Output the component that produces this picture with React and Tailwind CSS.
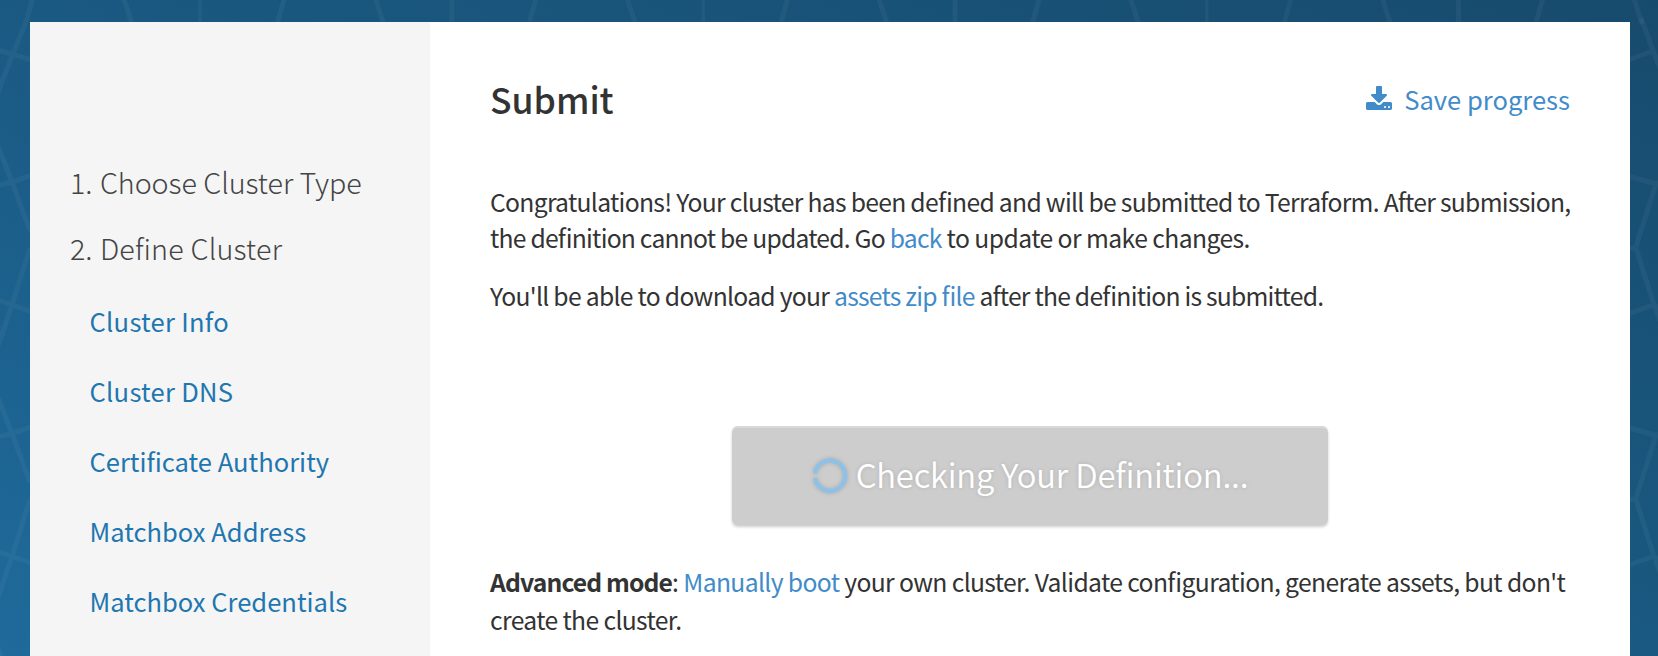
import React from "react";

const TILE = 251.7;
const columns = [-1, 0, 1, 2, 3, 4, 5, 6];
const rows = [0, 1, 2];

function Backdrop() {
  return (
    <svg className="absolute inset-0 h-full w-full" viewBox="0 0 1658 656" fill="none" stroke="#fff" strokeOpacity="0.045" strokeWidth="5">
      {columns.map((c) => (
        <g key={c} transform={`translate(${c * TILE} 0)`}>
          <path d="M34.500 -8L26 22" />
          <path d="M121 -10L132 24" />
          <path d="M200 -2V22" strokeWidth={c % 2 ? 5 : 3.5} />
        </g>
      ))}
      <path d="M26 22L12 56L-2 92M-2 50L32 60M1628 60L1653 51M1641 18L1653 50L1662 74" />
      {rows.map((r) => (
        <g key={r} transform={`translate(0 ${r * 251.500})`}>
          <path d="M-2 146L12 182L30 231M30 248L12 305L-2 346M-2 185.500L12 182L32 175M-2 300L12 305L32 312" />
          <path d="M1628 176L1656 184L1660 182M1656 184L1638 240L1636 248L1653 302L1662 326M1628 248H1636M1628 314L1653 305L1662 309" />
        </g>
      ))}
    </svg>
  );
}

function DownloadIcon() {
  return (
    <svg className="h-6 w-[26px]" viewBox="0 0 1664 1536" fill="currentColor">
      <path d="M1280 1344q0-26-19-45t-45-19-45 19-19 45 19 45 45 19 45-19 19-45zm256 0q0-26-19-45t-45-19-45 19-19 45 19 45 45 19 45-19 19-45zm128-224v320q0 40-28 68t-68 28h-1472q-40 0-68-28t-28-68v-320q0-40 28-68t68-28h465l135 136q58 56 136 56t136-56l136-136h464q40 0 68 28t28 68zm-325-569q17 41-14 70l-448 448q-18 19-45 19t-45-19l-448-448q-31-29-14-70 17-39 59-39h256v-448q0-26 19-45t45-19h256q26 0 45 19t19 45v448h256q42 0 59 39z" />
    </svg>
  );
}

function Spinner() {
  return (
    <svg className="h-[42px] w-[42px] drop-shadow-[0_0_2px_rgba(0,0,0,0.18)]" viewBox="0 0 42 42" fill="none" stroke="#8cc2e9" strokeWidth="4.300">
      <path d="M6 18.500A15.200 15.200 0 1 1 6 23" />
    </svg>
  );
}

function TextLink({ children }) {
  return <a href="#" className="text-[#428bca]">{children}</a>;
}

const steps = ["Cluster Info", "Cluster DNS", "Certificate Authority", "Matchbox Address", "Matchbox Credentials"];

export default function App() {
  return (
    <div className="relative h-[656px] w-[1658px] overflow-hidden bg-[linear-gradient(to_bottom_left,#174b6d,#1a5982_50%,#1f6a9b)] font-['Noto_Sans_CJK_SC','Noto_Sans',sans-serif] text-[#333]">
      <Backdrop />
      <div className="relative flex h-full pt-[22px] pl-[30px]">
        <aside className="w-[400px] shrink-0 bg-[#f5f5f5] pt-[129px] pl-10">
          <ol className="text-[28.700px] font-light text-[#444]">
            <li className="h-[66px] leading-[62px]">1. <span className="ml-px tracking-[-0.050px] [font-feature-settings:'liga'_1]">Choose Cluster Type</span></li>
            <li className="h-[66px] leading-[62px]">2. <span className="ml-px tracking-[0.200px] [font-feature-settings:'liga'_1]">Define Cluster</span></li>
          </ol>
          <ul className="pl-[19.500px] pt-px text-[25.550px] text-[#2176b0]">
            {steps.map((s, i) => (
              <li key={s} className={`h-[70px] leading-[73px] ${i < 2 ? "tracking-[0.280px]" : ""}`}><a href="#">{s}</a></li>
            ))}
          </ul>
        </aside>
        <main className="w-[1200px] shrink-0 whitespace-nowrap bg-white px-[60px] pt-[47px]">
          <header className="flex h-[60px] items-center justify-between">
            <h1 className="text-[35.500px] font-medium leading-[60px]">Submit</h1>
            <a href="#" className="flex items-center gap-3 text-[25.550px] leading-[60px] text-[#428bca]">
              <span className="-mt-[3px]"><DownloadIcon /></span>
              Save progress
            </a>
          </header>
          <div className="text-[24.700px] leading-9 [font-feature-settings:'liga'_1]">
            <p className="pt-[54px]">
              <span className="tracking-[-0.700px]">Congratulations! Your cluster has been defined and will be submitted to Terraform. After submission,</span>
              <br />
              <span className="tracking-[-0.780px]">the definition cannot be updated. Go <TextLink>back</TextLink></span>
              <span className="tracking-[-0.570px]"> to update or make changes.</span>
            </p>
            <p className="pt-[22px] tracking-[-0.770px]">
              <span className="tracking-[-0.710px]">You'll be able to download your </span>
              <TextLink>assets zip file</TextLink> after the definition is submitted.
            </p>
          </div>
          <div className="flex justify-center pt-[113px]">
            <button className="flex h-[99px] w-[596px] items-center justify-center rounded-md bg-[#cdcdcd] text-[32.800px] font-[350] text-white shadow-[inset_0_2px_0_#d8d8d8,0_2px_3px_rgba(0,0,0,0.2)] [text-shadow:0_0_4px_rgba(0,0,0,0.14)]">
              <span className="-ml-[3px]"><Spinner /></span>
              <span className="-mt-[3px] ml-[5px] tracking-[-0.180px] [font-feature-settings:'liga'_1]">Checking Your Definition...</span>
            </button>
          </div>
          <p className="pt-[37px] text-[24.700px] leading-[38px] tracking-[-0.630px] [font-feature-settings:'liga'_1]">
            <strong className="font-bold tracking-[-0.870px]">Advanced mode</strong>: <TextLink>Manually boot</TextLink> your own cluster. Validate configuration, generate assets, but don't
            <br />
            create the cluster.
          </p>
        </main>
      </div>
    </div>
  );
}
